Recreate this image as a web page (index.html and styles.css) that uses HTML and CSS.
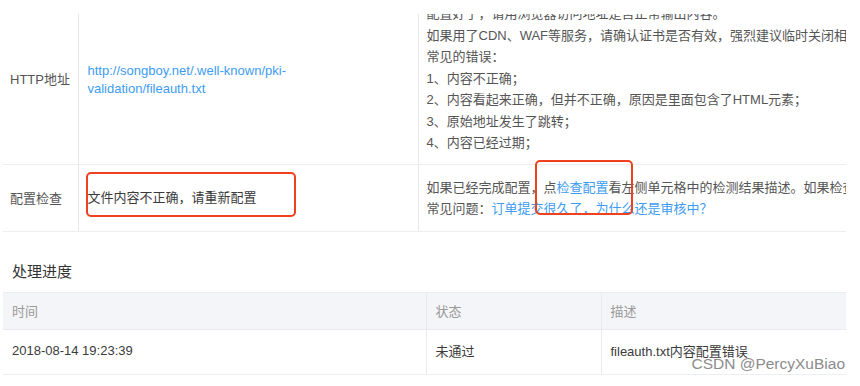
FILE: index.html
```html
<!DOCTYPE html>
<html lang="zh-CN">
<head>
    <meta charset="UTF-8">
    <meta name="viewport" content="width=device-width, initial-scale=1.0">
    <title>证书验证</title>
    <link rel="stylesheet" href="styles.css">
</head>
<body>
    <div class="page">
        <div class="clip">
            <table class="info">
                <colgroup>
                    <col class="col-label">
                    <col class="col-value">
                    <col class="col-desc">
                </colgroup>
                <tr>
                    <td class="label">HTTP地址</td>
                    <td class="value url"><a href="#">http://songboy.net/.well-known/pki-validation/fileauth.txt</a></td>
                    <td class="desc">
                        <p>配置好了，请用浏览器访问地址是否正常输出内容。</p>
                        <p>如果用了CDN、WAF等服务，请确认证书是否有效，强烈建议临时关闭相关服务。</p>
                        <p>常见的错误：</p>
                        <p>1、内容不正确；</p>
                        <p>2、内容看起来正确，但并不正确，原因是里面包含了HTML元素；</p>
                        <p>3、原始地址发生了跳转；</p>
                        <p>4、内容已经过期；</p>
                    </td>
                </tr>
                <tr class="check-row">
                    <td class="label">配置检查</td>
                    <td class="value">文件内容不正确，请重新配置</td>
                    <td class="desc">
                        <p>如果已经完成配置，点<a href="#">检查配置</a>看左侧单元格中的检测结果描述。如果检查不通过，请重新配置。</p>
                        <p>常见问题：<a href="#">订单提交很久了，为什么还是审核中？</a></p>
                    </td>
                </tr>
            </table>
        </div>

        <h3 class="section-title">处理进度</h3>

        <table class="progress">
            <colgroup>
                <col class="col-time">
                <col class="col-state">
                <col class="col-note">
            </colgroup>
            <thead>
                <tr>
                    <th>时间</th>
                    <th>状态</th>
                    <th>描述</th>
                </tr>
            </thead>
            <tbody>
                <tr>
                    <td>2018-08-14 19:23:39</td>
                    <td>未通过</td>
                    <td>fileauth.txt内容配置错误</td>
                </tr>
            </tbody>
        </table>

        <span class="mark mark-result"></span>
        <span class="mark mark-check"></span>
        <span class="watermark">CSDN @PercyXuBiao</span>
    </div>
</body>
</html>
```

FILE: styles.css
```css
html{
    box-sizing: border-box;
    font-family: "Liberation Sans", "Noto Sans CJK SC", sans-serif;
    font-size: 13px;
}

*,
*:after,
*:before{
    box-sizing: inherit;
}

body{
    margin: 0;
    background: #fff;
    color: #555;
}

a{
    color: #3d9cf2;
    text-decoration: none;
}

p{
    margin: 0;
}

.page{
    position: relative;
    width: 860px;
    height: 386px;
    overflow: hidden;
}

/* top table is cut off by the screenshot */
.clip{
    margin-top: 14px;
    overflow: hidden;
}

table{
    border-collapse: collapse;
    table-layout: fixed;
    margin-left: 3px;
    width: 843px;
}

.info{
    margin-top: -21px;
}

.col-label{ width: 75px; }
.col-value{ width: 340px; }
.col-desc{ width: 428px; }

.info td{
    border-bottom: 1px solid #eceef1;
    vertical-align: middle;
}

.info td + td{
    border-left: 1px solid #e6e8ec;
}

.label{
    padding: 0 7px;
    color: #555;
}

.value{
    padding: 10px 20px 10px 9px;
    line-height: 18px;
    color: #3a3a3a;
}

.url{
    padding-top: 14px;
}

.desc{
    padding: 10px 0 10px 8px;
    line-height: 21.5px;
    white-space: nowrap;
    overflow: hidden;
}

.check-row .desc{
    padding: 12px 0 12px 8px;
    line-height: 21px;
}

.section-title{
    margin: 30px 0 10px 12px;
    font-size: 15px;
    line-height: 20px;
    font-weight: normal;
    color: #333;
}

.col-time{ width: 423px; }
.col-state{ width: 175px; }
.col-note{ width: 245px; }

.progress th{
    background: #f4f5f8;
    border-top: 1px solid #eaecef;
    border-bottom: 1px solid #e8eaee;
    height: 37px;
    padding: 0 6px 0 9px;
    text-align: left;
    font-weight: normal;
    color: #999;
}

.progress td{
    height: 45px;
    padding: 0 6px 3px 9px;
    border-bottom: 1px solid #eceef1;
    color: #3a3a3a;
}

.progress th + th,
.progress td + td{
    border-left: 1px solid #e8eaee;
}

/* red highlight boxes drawn over the screenshot */
.mark{
    position: absolute;
    border: 2px solid #f0411e;
    border-radius: 5px;
}

.mark-result{
    left: 86px;
    top: 172px;
    width: 210px;
    height: 45px;
}

.mark-check{
    left: 535px;
    top: 160px;
    width: 98px;
    height: 55px;
}

.watermark{
    position: absolute;
    right: 15px;
    top: 355px;
    font-size: 15.5px;
    line-height: 18px;
    color: #8c8c8c;
}
```
